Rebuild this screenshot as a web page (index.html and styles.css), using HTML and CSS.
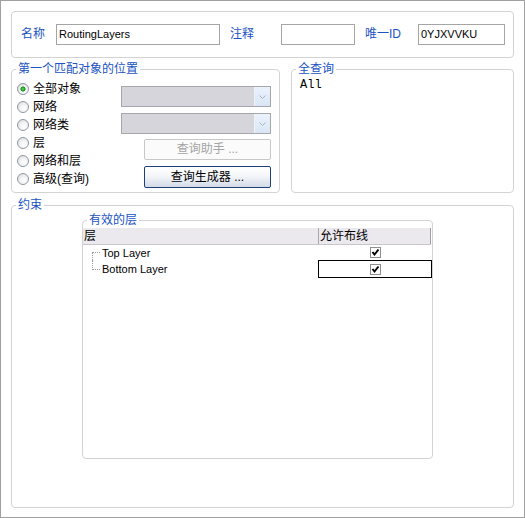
FILE: index.html
```html
<!DOCTYPE html>
<html>
<head>
<meta charset="utf-8">
<link rel="stylesheet" href="styles.css">
</head>
<body>
<div class="window">
  <div class="group-top">
    <span class="lbl lbl-name">名称</span>
    <div class="tb tb-name">RoutingLayers</div>
    <span class="lbl lbl-note">注释</span>
    <div class="tb tb-note"></div>
    <span class="lbl lbl-id">唯一ID</span>
    <div class="tb tb-id">0YJXVVKU</div>
  </div>

  <div class="mid">
    <fieldset class="fs fs-pos">
      <legend>第一个匹配对象的位置</legend>
      <div class="pos-body">
        <div class="radios">
          <div class="radio"><span class="rb on"></span>全部对象</div>
          <div class="radio"><span class="rb"></span>网络</div>
          <div class="radio"><span class="rb"></span>网络类</div>
          <div class="radio"><span class="rb"></span>层</div>
          <div class="radio"><span class="rb"></span>网络和层</div>
          <div class="radio"><span class="rb"></span>高级(查询)</div>
        </div>
        <div class="ctrls">
          <div class="combo"><span class="combo-btn"><svg width="7" height="4" viewBox="0 0 7 4"><path d="M0.5 0.5 L3.5 3.5 L6.5 0.5" fill="none" stroke="#a9b3c2" stroke-width="1"/></svg></span></div>
          <div class="combo"><span class="combo-btn"><svg width="7" height="4" viewBox="0 0 7 4"><path d="M0.5 0.5 L3.5 3.5 L6.5 0.5" fill="none" stroke="#a9b3c2" stroke-width="1"/></svg></span></div>
          <div class="btn btn-dis">查询助手 ...</div>
          <div class="btn btn-pri">查询生成器 ...</div>
        </div>
      </div>
    </fieldset>

    <fieldset class="fs fs-query">
      <legend>全查询</legend>
      <div class="query">All</div>
    </fieldset>
  </div>

  <fieldset class="fs fs-cons">
    <legend>约束</legend>
    <fieldset class="fs fs-layers">
      <legend>有效的层</legend>
      <div class="grid">
        <div class="hdr">
          <div class="hc c1">层</div>
          <div class="hc c2">允许布线</div>
        </div>
        <div class="row row1">
          <div class="c1"><span class="tree"><span class="t-top t-h"></span><span class="t-bot t-v"></span></span>Top Layer</div>
          <div class="c2"><span class="cb"><svg width="9" height="9" viewBox="0 0 9 9"><path d="M1.5 4 L3.5 6.5 L7.5 1.5" fill="none" stroke="#000" stroke-width="2"/></svg></span></div>
        </div>
        <div class="row row2">
          <div class="c1"><span class="tree"><span class="t-top t-h t-v"></span><span class="t-bot"></span></span>Bottom Layer</div>
          <div class="c2 sel"><span class="cb"><svg width="9" height="9" viewBox="0 0 9 9"><path d="M1.5 4 L3.5 6.5 L7.5 1.5" fill="none" stroke="#000" stroke-width="2"/></svg></span></div>
        </div>
      </div>
    </fieldset>
  </fieldset>
</div>
</body>
</html>
```

FILE: styles.css
```css
* { box-sizing: border-box; }
html, body { margin: 0; padding: 0; background: #fff; }
body {
  font-family: "Liberation Sans", "Noto Sans CJK SC", sans-serif;
  font-size: 12px;
  color: #000;
}
.window {
  width: 525px;
  height: 518px;
  border: 1px solid #a0a0a0;
  padding: 10px 0 0 10px;
  background: #fff;
}

/* top group */
.group-top {
  width: 503px;
  height: 47px;
  border: 1px solid #d3d3d3;
  border-radius: 4px;
  display: flex;
  align-items: flex-start;
  padding: 12px 0 0 9px;
}
.lbl {
  color: #2153c2;
  line-height: 21px;
  height: 21px;
  white-space: nowrap;
}
.lbl-name { width: 35px; }
.lbl-note { width: 51px; margin-left: 10px; }
.lbl-id { width: 53px; margin-left: 10px; }
.tb {
  height: 21px;
  border: 1px solid #a5a5a5;
  font-size: 11px;
  line-height: 19px;
  padding-left: 2px;
  background: #fff;
}
.tb-name { width: 164px; }
.tb-note { width: 74px; }
.tb-id { width: 87px; }

/* fieldsets */
.fs {
  margin: 0;
  padding: 0;
  border: 1px solid #d3d3d3;
  border-radius: 4px;
  min-width: 0;
}
.fs > legend {
  margin-left: 4px;
  padding: 0 2px;
  color: #2153c2;
  line-height: 15px;
  font-size: 12px;
}
.mid {
  display: flex;
  gap: 11px;
  margin-top: 4px;
}
.fs-pos { width: 269px; height: 131px; }
.fs-query { width: 223px; height: 131px; }
.fs-cons { width: 503px; height: 310px; margin-top: 5px; }

/* position group */
.pos-body {
  display: flex;
  padding: 3px 0 0 5px;
}
.radios {
  width: 104px;
  display: flex;
  flex-direction: column;
}
.radio {
  height: 18px;
  display: flex;
  align-items: center;
  line-height: 18px;
  white-space: nowrap;
}
.rb {
  width: 12px;
  height: 12px;
  flex: none;
  border-radius: 50%;
  border: 1px solid #8d99a6;
  background: radial-gradient(circle at 62% 65%, #ffffff 0%, #f4f4f4 40%, #d6d6d6 100%);
  margin-right: 4px;
}
.rb.on {
  background:
    radial-gradient(circle at 50% 50%, #6fdc6f 0, #22a822 1.6px, #1d8f1d 2.3px, rgba(255,255,255,0) 2.8px),
    radial-gradient(circle at 62% 65%, #ffffff 0%, #f4f4f4 40%, #d6d6d6 100%);
}
.ctrls {
  width: 150px;
  margin-top: 6px;
  display: flex;
  flex-direction: column;
  align-items: flex-end;
  gap: 6px;
}
.combo {
  width: 150px;
  height: 21px;
  border: 1px solid #a6a6ab;
  background: #d5d5db;
  display: flex;
  justify-content: flex-end;
}
.combo-btn {
  width: 16px;
  height: 19px;
  background: linear-gradient(#eaf2fc, #dae6f5);
  border-left: 1px solid #eef3fa;
  display: flex;
  align-items: center;
  justify-content: center;
}
.btn {
  width: 127px;
  height: 21px;
  border-radius: 2px;
  text-align: center;
  line-height: 19px;
  font-size: 12px;
  white-space: nowrap;
}
.btn-dis {
  margin-top: -1px;
  border: 1px solid #c8c8c8;
  color: #a4a4a4;
  background: #fbfbfb;
}
.btn-pri {
  height: 22px;
  line-height: 20px;
  border: 1px solid #1f3f7c;
  background: linear-gradient(#ffffff 0%, #f4f6f9 45%, #d3dbe8 100%);
  color: #000;
}

/* query */
.query {
  font-family: "Liberation Mono", monospace;
  font-size: 12px;
  line-height: 14px;
  padding: 1px 0 0 8px;
}

/* constraints */
.fs-layers {
  margin-left: 70px;
  width: 351px;
  height: 246px;
}
.grid {
  width: 349px;
}
.hdr {
  display: flex;
  height: 17px;
  margin-right: 1px;
  background: #ebe9ed;
  border-bottom: 1px solid #c8c6cb;
}
.hc {
  line-height: 16px;
  white-space: nowrap;
}
.hc.c1 { width: 235px; padding-left: 1px; }
.hc.c2 {
  flex: 1;
  border-left: 1px solid #a9a8ac;
  border-right: 1px solid #9e9da2;
  padding-left: 1px;
}
.row { display: flex; }
.row1 { height: 15px; }
.row2 { height: 18px; }
.row .c1 {
  width: 235px;
  padding-left: 9px;
  display: flex;
  align-items: center;
  font-size: 11px;
  white-space: nowrap;
}
.row .c2 {
  width: 114px;
  display: flex;
  align-items: center;
  justify-content: center;
}
.row .c2.sel { border: 1px solid #000; }
.tree {
  width: 8px;
  align-self: stretch;
  display: flex;
  flex-direction: column;
  margin-right: 2px;
}
.t-top, .t-bot { flex: 1; }
.t-h { border-bottom: 1px dotted #9a9a9a; }
.t-v { border-left: 1px dotted #9a9a9a; }
.cb {
  width: 11px;
  height: 11px;
  border: 1px solid #8e8e8e;
  background: #fff;
  display: flex;
  align-items: center;
  justify-content: center;
}
```
